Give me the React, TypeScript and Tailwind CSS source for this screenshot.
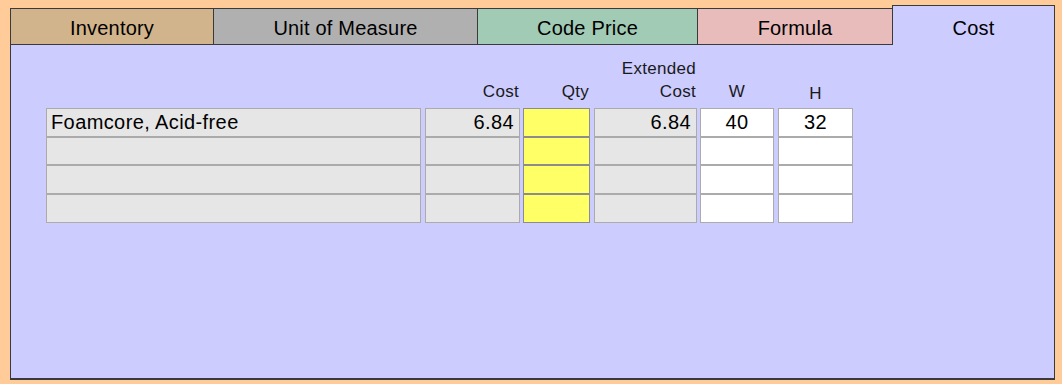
const tabs = [
  { label: 'Inventory', w: 'w-[203px]', bg: 'bg-[#d2b48c]' },
  { label: 'Unit of Measure', w: 'w-[264px]', bg: 'bg-[#b0b0b0]' },
  { label: 'Code Price', w: 'w-[220px]', bg: 'bg-[#a2cbb5]' },
  { label: 'Formula', w: 'w-[195px]', bg: 'bg-[#e9bcbc]' },
]

const heights = ['h-[29px]', 'h-[28px]', 'h-[29px]', 'h-[29px]']

type Col = {
  key: string
  w: string
  ml: string
  header: string[]
  headerAlign: string
  headerPb: string
  cell: string
  align: string
  values: string[]
}

const cols: Col[] = [
  { key: 'name', w: 'w-[375px]', ml: '', header: [], headerAlign: '', headerPb: 'pb-[5px]', cell: 'bg-[#e6e6e6] border-[#ababab]', align: 'justify-start pl-[4px]', values: ['Foamcore, Acid-free', '', '', ''] },
  { key: 'cost', w: 'w-[95px]', ml: 'ml-[4px]', header: ['Cost'], headerAlign: 'text-right pr-[1px]', headerPb: 'pb-[5px]', cell: 'bg-[#e6e6e6] border-[#ababab]', align: 'justify-end pr-[5px]', values: ['6.84', '', '', ''] },
  { key: 'qty', w: 'w-[67px]', ml: 'ml-[3px]', header: ['Qty'], headerAlign: 'text-right pr-[1px]', headerPb: 'pb-[5px]', cell: 'bg-[#ffff66] border-[#8c8c8c]', align: 'justify-end pr-[5px]', values: ['', '', '', ''] },
  { key: 'ext', w: 'w-[103px]', ml: 'ml-[4px]', header: ['Extended', 'Cost'], headerAlign: 'text-right pr-[1px]', headerPb: 'pb-[5px]', cell: 'bg-[#e6e6e6] border-[#ababab]', align: 'justify-end pr-[5px]', values: ['6.84', '', '', ''] },
  { key: 'w', w: 'w-[74px]', ml: 'ml-[3px]', header: ['W'], headerAlign: 'text-center', headerPb: 'pb-[5px]', cell: 'bg-white border-[#ababab]', align: 'justify-center', values: ['40', '', '', ''] },
  { key: 'h', w: 'w-[75px]', ml: 'ml-[4px]', header: ['H'], headerAlign: 'text-center', headerPb: 'pb-[3px]', cell: 'bg-white border-[#ababab]', align: 'justify-center', values: ['32', '', '', ''] },
]

export default function App() {
  return (
    <div className="w-[1062px] h-[384px] bg-[#ffcc99] pl-[10px] pt-[5px] font-['Liberation_Sans',Arial,sans-serif] text-black">
      {/* tab strip */}
      <div className="flex items-end h-[40px]">
        {tabs.map((t) => (
          <div
            key={t.label}
            className={`${t.w} ${t.bg} h-[37px] border-t border-l border-b border-[#3a3a3a] flex items-center justify-center text-[20px] tracking-[0.2px] pt-[2px]`}
          >
            {t.label}
          </div>
        ))}
        <div className="w-[163px] h-[40px] bg-[#ccccff] border-t border-l border-r border-[#3a3a3a] flex items-center justify-center text-[20px] tracking-[0.2px] pt-[5px]">
          Cost
        </div>
      </div>

      {/* panel */}
      <div className="w-[1045px] h-[335px] bg-[#ccccff] border-l border-r border-b-2 border-[#3a3a3a] pl-[35px]">
        <div className="flex">
          {cols.map((c) => (
            <div key={c.key} className={`${c.w} ${c.ml} flex flex-col`}>
              <div className={`h-[63px] flex flex-col justify-end ${c.headerPb} ${c.headerAlign} text-[17px] tracking-[0.3px] leading-[23px] text-[#1a1a1a]`}>
                {c.header.map((h) => (
                  <div key={h}>{h}</div>
                ))}
              </div>
              {c.values.map((v, i) => (
                <div
                  key={i}
                  className={`${heights[i]} border ${c.cell} flex items-center ${c.align} pb-[2px] text-[20px] tracking-[0.4px] whitespace-nowrap`}
                >
                  {v}
                </div>
              ))}
            </div>
          ))}
        </div>
      </div>
    </div>
  )
}
